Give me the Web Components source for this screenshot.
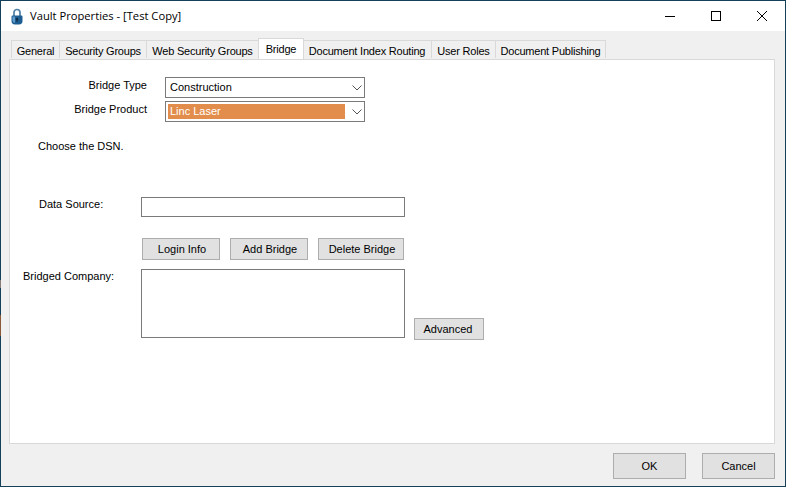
<!DOCTYPE html>
<html>
<head>
<meta charset="utf-8">
<title>Vault Properties</title>
<style>
  html, body { margin: 0; height: 100%; }
  body {
    background: #15405a linear-gradient(#15405a 0 280px, #8a7d78 280px 288px, #15405a 288px 315px, #8a5a38 315px 336px, #15405a 336px) no-repeat 0 0 / 1px 100%;
    font: 11px "Liberation Sans", Arial, sans-serif;
    color: #000;
    overflow: hidden;
  }
</style>
</head>
<body>
<vault-window>
  <window-title slot="title">Vault Properties - [Test Copy]</window-title>
  <tab-strip slot="tabs">
    <tab-item w="49">General</tab-item>
    <tab-item w="87">Security Groups</tab-item>
    <tab-item w="112">Web Security Groups</tab-item>
    <tab-item w="46" selected>Bridge</tab-item>
    <tab-item w="129">Document Index Routing</tab-item>
    <tab-item w="64">User Roles</tab-item>
    <tab-item w="110">Document Publishing</tab-item>
  </tab-strip>
  <bridge-form></bridge-form>
  <win-button slot="footer" w="73" h="26">OK</win-button>
  <win-button slot="footer" w="73" h="26">Cancel</win-button>
</vault-window>

<script>
class VaultWindow extends HTMLElement {
  constructor() {
    super();
    this.attachShadow({ mode: "open" });
    this.shadowRoot.innerHTML = /* html */`
    <style>
      :host {
        display: flex;
        flex-direction: column;
        margin: 1px;
        height: 485px;
        background: #f0f0f0;
      }
      .tabs { padding: 8px 0 0 10px; height: 20px; }
      .panel {
        margin: 0 10px 0 8px;
        height: 385px;
        box-sizing: border-box;
        background: #fff;
        border: 1px solid #d9d9d9;
      }
      .footer {
        display: flex;
        justify-content: flex-end;
        gap: 16px;
        padding: 9px 10px 0 0;
      }
    </style>
    <slot name="title"></slot>
    <div class="tabs"><slot name="tabs"></slot></div>
    <div class="panel"><slot></slot></div>
    <div class="footer"><slot name="footer"></slot></div>`;
  }
}

class WindowTitle extends HTMLElement {
  constructor() {
    super();
    this.attachShadow({ mode: "open" });
    this.shadowRoot.innerHTML = /* html */`
    <style>
      :host {
        display: flex;
        align-items: center;
        height: 30px;
        background: #fff;
        flex: none;
      }
      .lock { margin-left: 10px; width: 12px; height: 17px; }
      .text {
        margin: 0 0 2px 7px;
        font: 11.2px "Open Sans", "Liberation Sans", sans-serif;
        flex: 1;
        white-space: nowrap;
      }
      .ctls { display: flex; }
      .ctl { width: 46px; height: 30px; display: flex; align-items: center; justify-content: center; }
      .ctl svg { width: 12px; height: 12px; display: block; }
    </style>
    <svg class="lock" viewBox="0 0 12 17">
      <path d="M3 8V4.5a3 3 0 0 1 6 0V8" fill="none" stroke="#4d7fa6" stroke-width="1.7"/>
      <path d="M1.5 7.5h9q1 0 1 1.2v4.3q0 3.2-3.5 3.5h-4Q.5 16.2.5 13V8.7q0-1.2 1-1.2z" fill="#1d5d92"/>
      <path d="M1.5 8.5h2.5v6.5q-2.5-.5-2.5-2.5z" fill="#5f9ccc"/>
      <circle cx="6" cy="11" r="1.3" fill="#0e2d49"/>
      <rect x="5.4" y="11" width="1.2" height="2.8" fill="#0e2d49"/>
    </svg>
    <span class="text"><slot></slot></span>
    <div class="ctls">
      <div class="ctl"><svg viewBox="0 0 12 12"><path d="M1 6.5h10" stroke="#000" stroke-width="1" fill="none"/></svg></div>
      <div class="ctl"><svg viewBox="0 0 12 12"><rect x="1.5" y="1.5" width="9" height="9" stroke="#000" stroke-width="1" fill="none"/></svg></div>
      <div class="ctl"><svg viewBox="0 0 12 12"><path d="M1 1l10 10M11 1L1 11" stroke="#000" stroke-width="1" fill="none"/></svg></div>
    </div>`;
  }
}

class TabStrip extends HTMLElement {
  constructor() {
    super();
    this.attachShadow({ mode: "open" });
    this.shadowRoot.innerHTML = /* html */`
    <style>
      :host { display: flex; align-items: flex-end; height: 20px; position: relative; z-index: 1; }
    </style>
    <slot></slot>`;
  }
}

class TabItem extends HTMLElement {
  constructor() {
    super();
    this.attachShadow({ mode: "open" });
    this.shadowRoot.innerHTML = /* html */`
    <style>
      :host {
        display: block;
        box-sizing: border-box;
        height: 18px;
        line-height: 21px;
        letter-spacing: -0.21px;
        text-align: center;
        white-space: nowrap;
        background: #f0f0f0;
        border: 1px solid #d9d9d9;
        border-left-width: 0;
        border-bottom: 0;
        margin-bottom: 1px;
      }
      :host(:first-child) { border-left-width: 1px; }
      :host([selected]) {
        height: 21px;
        background: #fff;
        margin: 0 -1px;
        border-left-width: 1px;
        position: relative;
        z-index: 2;
      }
    </style>
    <slot></slot>`;
  }
  connectedCallback() {
    this.style.width = this.getAttribute("w") + "px";
  }
}

class WinButton extends HTMLElement {
  constructor() {
    super();
    this.attachShadow({ mode: "open" });
    this.shadowRoot.innerHTML = /* html */`
    <style>
      :host {
        display: flex;
        align-items: center;
        justify-content: center;
        box-sizing: border-box;
        flex: none;
        background: #e1e1e1;
        border: 1px solid #adadad;
        white-space: nowrap;
      }
    </style>
    <slot></slot>`;
  }
  connectedCallback() {
    this.style.width = this.getAttribute("w") + "px";
    this.style.height = this.getAttribute("h") + "px";
  }
}

class ComboField extends HTMLElement {
  constructor() {
    super();
    this.attachShadow({ mode: "open" });
    this.shadowRoot.innerHTML = /* html */`
    <style>
      :host {
        display: flex;
        align-items: center;
        box-sizing: border-box;
        width: 200px;
        height: 21px;
        background: #fff;
        border: 1px solid #7a7a7a;
        padding-left: 2px;
      }
      .value { width: 177px; height: 15px; line-height: 15px; padding-left: 2px; box-sizing: border-box; white-space: nowrap; }
      :host([active]) .value { background: #e28d4b; color: #fff; }
      svg { width: 10px; height: 6px; margin-left: 7px; display: block; }
    </style>
    <div class="value"><slot></slot></div>
    <svg viewBox="0 0 10 6"><path d="M.5 .5L5 5l4.5-4.5" fill="none" stroke="#555" stroke-width="1"/></svg>`;
  }
}

class TextField extends HTMLElement {
  constructor() {
    super();
    this.attachShadow({ mode: "open" });
    this.shadowRoot.innerHTML = /* html */`
    <style>
      :host {
        display: block;
        box-sizing: border-box;
        width: 264px;
        background: #fff;
        border: 1px solid #7a7a7a;
      }
    </style>`;
  }
  connectedCallback() {
    this.style.height = this.getAttribute("h") + "px";
  }
}

class BridgeForm extends HTMLElement {
  constructor() {
    super();
    this.attachShadow({ mode: "open" });
    this.shadowRoot.innerHTML = /* html */`
    <style>
      :host { display: block; }
      .type {
        display: grid;
        grid-template-columns: 137px 200px;
        column-gap: 18px;
        row-gap: 3px;
        padding-top: 17px;
      }
      .type span { text-align: right; line-height: 16px; }
      .hint { margin: 16px 0 0 28px; line-height: 16px; }
      .source {
        display: grid;
        grid-template-columns: 131px 264px;
        margin-top: 43px;
      }
      .source span { padding-left: 29px; line-height: 14px; }
      .actions {
        display: flex;
        gap: 10px;
        margin: 21px 0 0 132px;
      }
      .actions win-button { padding-left: 2px; }
      .company {
        display: grid;
        grid-template-columns: 131px 264px auto;
        margin-top: 9px;
      }
      .company span { padding-left: 13px; line-height: 14px; }
      .company win-button { align-self: end; margin: 0 0 -2px 9px; padding-right: 2px; }
    </style>
    <div class="type">
      <span>Bridge Type</span>
      <combo-field>Construction</combo-field>
      <span>Bridge Product</span>
      <combo-field active>Linc Laser</combo-field>
    </div>
    <div class="hint">Choose the DSN.</div>
    <div class="source">
      <span>Data Source:</span>
      <text-field h="20"></text-field>
    </div>
    <div class="actions">
      <win-button w="78" h="22">Login Info</win-button>
      <win-button w="78" h="22">Add Bridge</win-button>
      <win-button w="86" h="22">Delete Bridge</win-button>
    </div>
    <div class="company">
      <span>Bridged Company:</span>
      <text-field h="69"></text-field>
      <win-button w="70" h="22">Advanced</win-button>
    </div>`;
  }
}

customElements.define("vault-window", VaultWindow);
customElements.define("window-title", WindowTitle);
customElements.define("tab-strip", TabStrip);
customElements.define("tab-item", TabItem);
customElements.define("win-button", WinButton);
customElements.define("combo-field", ComboField);
customElements.define("text-field", TextField);
customElements.define("bridge-form", BridgeForm);
</script>
</body>
</html>
